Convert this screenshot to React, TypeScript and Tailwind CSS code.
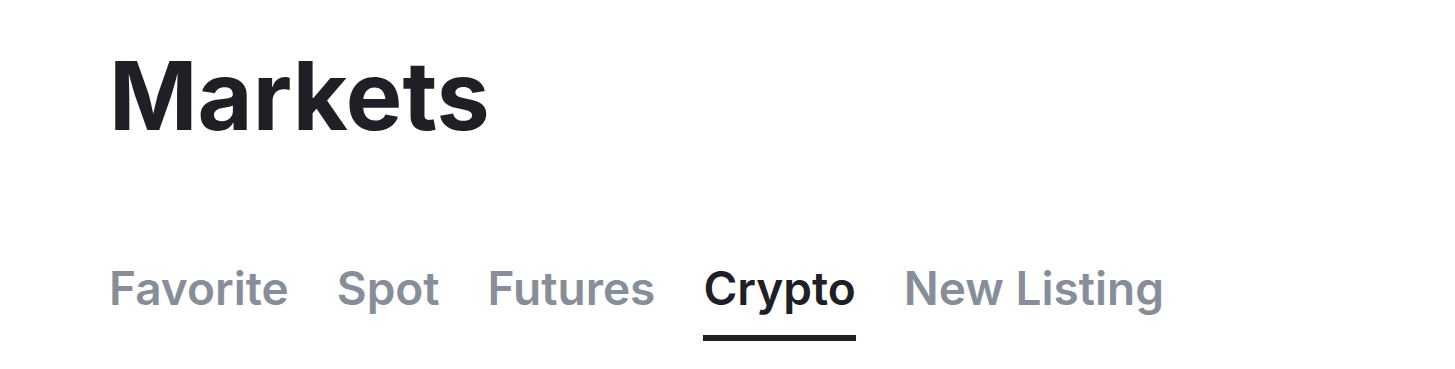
const TABS = ["Favorite", "Spot", "Futures", "Crypto", "New Listing"];
const ACTIVO = "Crypto";

export default function App() {
  return (
    <div className="min-h-[369px] bg-white pl-[109px] pt-[48px]" style={{ fontFamily: "Inter, sans-serif" }}>
      <h1 className="text-[95px] leading-none font-bold text-[#1e2026]">Markets</h1>

      <div className="mt-[122px] flex gap-[48px]">
        {TABS.map((t) => {
          const activo = t === ACTIVO;
          return (
            <div key={t} className="flex flex-col">
              <span
                className={`text-[46px] leading-none font-semibold ${
                  activo ? "text-[#1e2026]" : "text-[#868f99]"
                }`}
              >
                {t}
              </span>
              <div className={`mt-[24px] h-[6px] ${activo ? "bg-[#1e2026]" : "bg-transparent"}`} />
            </div>
          );
        })}
      </div>
    </div>
  );
}
